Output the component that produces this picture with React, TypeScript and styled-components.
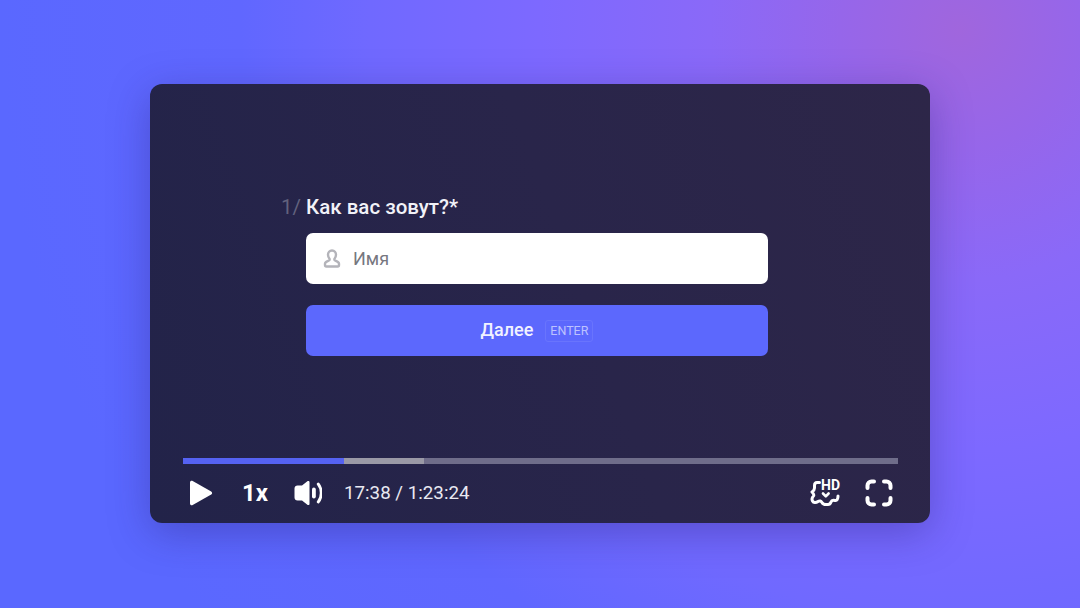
import styled, { createGlobalStyle } from "styled-components";

const GlobalStyle = createGlobalStyle`
  html, body {
    margin: 0;
    padding: 0;
    width: 1080px;
    height: 608px;
    overflow: hidden;
    font-family: Roboto, "Liberation Sans", sans-serif;
  }
`;

const Page = styled.div`
  width: 1080px;
  height: 608px;
  padding: 84px 150px 85px;
  box-sizing: border-box;
  background: radial-gradient(
    circle at 960px 30px,
    #a066dd 0,
    #9666ea 120px,
    #8a69f8 250px,
    #7d69ff 420px,
    #7069ff 590px,
    #6067ff 720px,
    #5a68ff 960px
  );
`;

const Player = styled.div`
  height: 439px;
  border-radius: 12px;
  display: flex;
  flex-direction: column;
  background: linear-gradient(70deg, #222349 0%, #29254a 55%, #2d2648 100%);
  box-shadow: 0 10px 40px rgba(40, 30, 120, 0.36);
`;

const Stage = styled.div`
  flex: 1;
  padding: 111px 0 0 131px;
  display: flex;
  flex-direction: column;
`;

const Question = styled.div`
  display: flex;
  align-items: baseline;
  gap: 6px;
  height: 26px;
  margin-bottom: 12px;
  font-size: 20.5px;
  font-weight: 500;
  color: #f2f2f8;
`;

const QuestionNumber = styled.span`
  color: #62627e;
  font-weight: 400;
  width: 19px;
`;

const Column = styled.div`
  width: 462px;
  margin-left: 25px;
  display: flex;
  flex-direction: column;
  gap: 21px;
`;

const InputBox = styled.div`
  height: 51px;
  border-radius: 7px;
  background: #fff;
  display: flex;
  align-items: center;
  gap: 12px;
  padding-left: 17px;
  font-size: 18px;
  color: #77777f;
`;

const NextButton = styled.div`
  height: 51px;
  border-radius: 7px;
  background: #5c68fd;
  display: flex;
  align-items: center;
  justify-content: center;
  gap: 12px;
  color: #f1f2ff;
  font-size: 18px;
  font-weight: 500;
`;

const ButtonLabel = styled.span`
  position: relative;
  top: -1px;
`;

const Key = styled.span`
  height: 20px;
  padding: 0 4px;
  display: flex;
  align-items: center;
  font-size: 12.5px;
  font-weight: 400;
  color: #bcc2ff;
  border: 1px solid #6974fd;
  border-radius: 3px;
`;

const Controls = styled.div`
  padding: 0 32px 0 33px;
  height: 65px;
`;

const Track = styled.div`
  height: 6px;
  background: #6f6d8a;
  position: relative;
`;

const Buffered = styled.div`
  height: 100%;
  background: #9a99a6;
  position: absolute;
  left: 0;
  top: 0;
`;

const Played = styled(Buffered)`
  background: #5562f2;
`;

const Bar = styled.div`
  display: flex;
  align-items: center;
  height: 59px;
  padding-bottom: 2px;
  box-sizing: border-box;
  color: #fff;
`;

const IconSlot = styled.div<{ $w: number; $ml?: number }>`
  width: ${(p) => p.$w}px;
  margin-left: ${(p) => p.$ml ?? 0}px;
  flex: none;
  display: flex;
  align-items: center;
  justify-content: center;
`;

const Speed = styled.div`
  margin-left: 29px;
  font-size: 24px;
  font-weight: 700;
  line-height: 28px;
  width: 26px;
`;

const Time = styled.div`
  margin-left: 22px;
  font-size: 18.75px;
  color: #e9e9f2;
`;

const Spacer = styled.div`
  flex: 1;
`;

function UserIcon() {
  return (
    <svg width="18" height="19" viewBox="0 0 18 19" fill="none" stroke="#b4b4ba" strokeWidth="2.4" strokeLinejoin="round">
      <path d="M9 1.500c2.500 0 4 1.800 4 4.200 0 1.800-.8 3.200-1.600 4.200v1.200c0 .8 4.600 1.200 4.600 3.600v1.400c0 .8-.5 1.400-1.300 1.400H3.300c-.8 0-1.300-.6-1.300-1.400v-1.400c0-2.400 4.600-2.800 4.600-3.600V9.900C5.800 8.900 5 7.500 5 5.700c0-2.400 1.500-4.200 4-4.200z" />
    </svg>
  );
}

function PlayIcon() {
  return (
    <svg width="24" height="26" viewBox="0 0 24 26" fill="#fff">
      <path d="M1 2.500C1 1 2.400.3 3.700 1l18.500 10.400c1.200.7 1.200 2.500 0 3.200L3.700 25C2.400 25.700 1 25 1 23.500z" />
    </svg>
  );
}

function VolumeIcon() {
  return (
    <svg width="28" height="26" viewBox="0 0 28 26" fill="#fff">
      <path d="M15.500 2v22c0 1-1 1.400-1.800.9L8 20.500H3.500C1.800 20.500.5 19.200.5 17.500v-9C.5 6.800 1.800 5.500 3.500 5.500H8l5.700-4.400c.8-.5 1.800-.1 1.800.9z" />
      <rect x="18" y="7.500" width="3.800" height="11" rx="1.900" />
      <path d="M24.200 4c2 2.400 3 5.500 3 9s-1 6.600-3 9" fill="none" stroke="#fff" strokeWidth="2.800" strokeLinecap="round" />
    </svg>
  );
}

function HdIcon() {
  return (
    <svg width="32" height="34" viewBox="0 -3 32 34" fill="none" stroke="#fff" strokeWidth="3" strokeLinecap="round" strokeLinejoin="round">
      <path d="M9.500 3.500H7C5 3.500 4.500 5 4.500 6.500V9c0 2-1 3-2.500 4 1.500 1.500 2.500 2.500 1.500 4-1.500 1.500-2 3-1 5 1 2 3.500 2 5.500.5 1.500-1 3-.5 4 1 1 2 2 2 4 2h2c2 0 2.500-1 3-2.500.5-1.500 2-2 4-1.500 2 .5 3-1.500 3-4.500" />
      <path d="M13 14.500l2.800 2.800 2.800-2.800" strokeWidth="2.600" />
      <text x="11" y="11" fontFamily="Roboto, sans-serif" fontSize="14" fontWeight="700" fill="#fff" stroke="none">HD</text>
    </svg>
  );
}

function FullscreenIcon() {
  return (
    <svg width="28" height="28" viewBox="0 0 28 28" fill="none" stroke="#fff" strokeWidth="4" strokeLinecap="round" strokeLinejoin="round">
      <path d="M2.500 9V6.500c0-2.200 1.800-4 4-4H9" />
      <path d="M19 2.500h2.500c2.200 0 4 1.800 4 4V9" />
      <path d="M25.500 19v2.500c0 2.200-1.800 4-4 4H19" />
      <path d="M9 25.500H6.500c-2.200 0-4-1.800-4-4V19" />
    </svg>
  );
}

export default function App() {
  return (
    <>
      <GlobalStyle />
      <Page>
        <Player>
          <Stage>
            <Question>
              <QuestionNumber>1/</QuestionNumber>
              <span>Как вас зовут?*</span>
            </Question>
            <Column>
              <InputBox>
                <UserIcon />
                <span>Имя</span>
              </InputBox>
              <NextButton>
                <ButtonLabel>Далее</ButtonLabel>
                <Key>ENTER</Key>
              </NextButton>
            </Column>
          </Stage>
          <Controls>
            <Track>
              <Buffered style={{ width: `${(241 / 715) * 100}%` }} />
              <Played style={{ width: `${(161 / 715) * 100}%` }} />
            </Track>
            <Bar>
              <IconSlot $w={24} $ml={6}><PlayIcon /></IconSlot>
              <Speed>1x</Speed>
              <IconSlot $w={28} $ml={26}><VolumeIcon /></IconSlot>
              <Time>17:38 / 1:23:24</Time>
              <Spacer />
              <IconSlot $w={32}><HdIcon /></IconSlot>
              <IconSlot $w={28} $ml={23}><FullscreenIcon /></IconSlot>
              <IconSlot $w={5} />
            </Bar>
          </Controls>
        </Player>
      </Page>
    </>
  );
}
